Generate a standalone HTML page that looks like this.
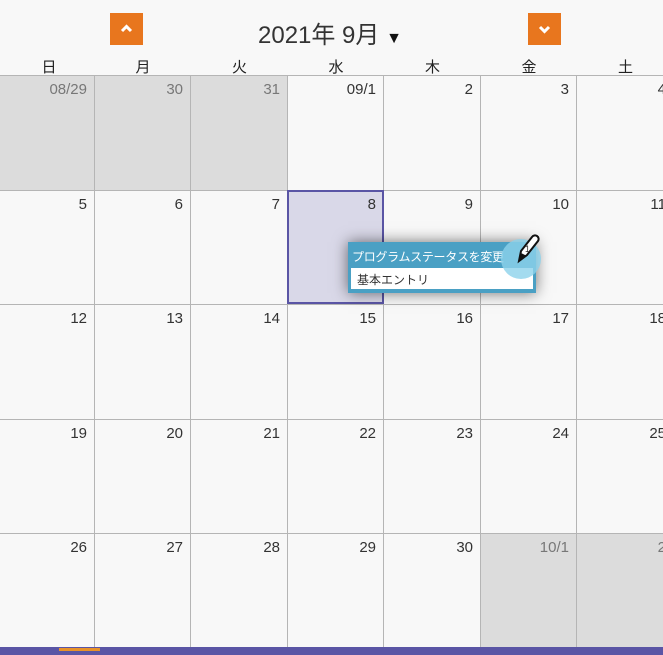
<!DOCTYPE html><html><head><meta charset="utf-8"><style>
body{margin:0;width:663px;height:655px;overflow:hidden;background:#f8f8f8;font-family:"Liberation Sans","Noto Sans CJK JP",sans-serif;position:relative}
.btn{position:absolute;top:13px;width:33px;height:32px;background:#e8761e}
.title{position:absolute;left:258px;top:15px;font-size:24px;color:#333}
.wd{position:absolute;top:56px;width:96px;text-align:center;font-size:15px;color:#222}
.c{position:absolute;box-sizing:border-box;border-right:1px solid #b5b5b5;border-bottom:1px solid #b5b5b5;font-size:15px;color:#333;text-align:right;padding:5px 7px 0 0}
.g{background:#dcdcdc;color:#777}
</style></head><body>
<div class="btn" style="left:110px"><svg width="33" height="32"><path d="M12 18l4.5-4.5 4.5 4.5" stroke="#fff" stroke-width="3" fill="none"/></svg></div>
<div class="btn" style="left:528px"><svg width="33" height="32"><path d="M12 14l4.5 4.5 4.5-4.5" stroke="#fff" stroke-width="3" fill="none"/></svg></div>
<div class="title">2021年 9月 <span style="font-size:16px;color:#111">▼</span></div>
<div id="g"></div>
<div style="position:absolute;left:287px;top:190px;width:97px;height:114px;box-sizing:border-box;border:2px solid #5a55a5;background:#d9d8e8;text-align:right;font-size:15px;color:#333;padding:4px 6px 0 0">8</div>
<div style="position:absolute;left:348px;top:242px;width:188px;height:51px;background:#4aa0c4;box-shadow:0 0 14px rgba(0,0,0,.55)">
<div style="color:#fff;font-size:12px;padding:6px 0 0 4px;letter-spacing:-0.3px">プログラムステータスを変更</div>
<div style="position:absolute;left:3px;top:26px;width:182px;height:21px;background:#fff;font-size:12px;color:#333;padding:3px 0 0 6px;box-sizing:border-box">基本エントリ</div>
</div>
<div style="position:absolute;left:501px;top:239px;width:40px;height:40px;border-radius:50%;background:rgba(140,210,235,.8)"></div>
<svg style="position:absolute;left:514px;top:231px" width="30" height="34"><path d="M5 30l2-10 11-14a3 3 0 0 1 6 4L13 24z" fill="#fff" stroke="#111" stroke-width="2"/><path d="M5 30l2-8 6 3z" fill="#111"/><text x="11" y="21" font-size="9" fill="#333" font-family="Liberation Sans">1</text></svg>
<div style="position:absolute;left:0;top:647px;width:663px;height:8px;background:#5a55a5"></div>
<div style="position:absolute;left:59px;top:648px;width:41px;height:3px;background:#e8922a"></div>
<script>
var xs=[-3,95,191,288,384,481,577,674],ys=[75,191,305,420,534,647];
var wd="日月火水木金土",h="";
for(var i=0;i<7;i++)h+='<div class="wd" style="left:'+(xs[i]+(i==0?3:0))+'px;width:'+(xs[i+1]-xs[i])+'px">'+wd[i]+'</div>';
var d=[["08/29","30","31","09/1","2","3","4"]];
for(var r=1;r<5;r++){var row=[];for(var k=0;k<7;k++){var n=5+(r-1)*7+k;row.push(n<=30?""+n:(n==31?"10/1":""+(n-30)));}d.push(row);}
for(var r=0;r<5;r++)for(var k=0;k<7;k++){var g=(r==0&&k<3)||(r==4&&k>4);
h+='<div class="c'+(g?' g':'')+'" style="left:'+xs[k]+'px;top:'+ys[r]+'px;width:'+(xs[k+1]-xs[k])+'px;height:'+(ys[r+1]-ys[r])+'px;'+(r==0?'border-top:1px solid #b5b5b5;':'')+(r==4?'border-bottom:0;':'')+'">'+d[r][k]+'</div>';}
document.getElementById('g').innerHTML=h;
</script>
</body></html>
